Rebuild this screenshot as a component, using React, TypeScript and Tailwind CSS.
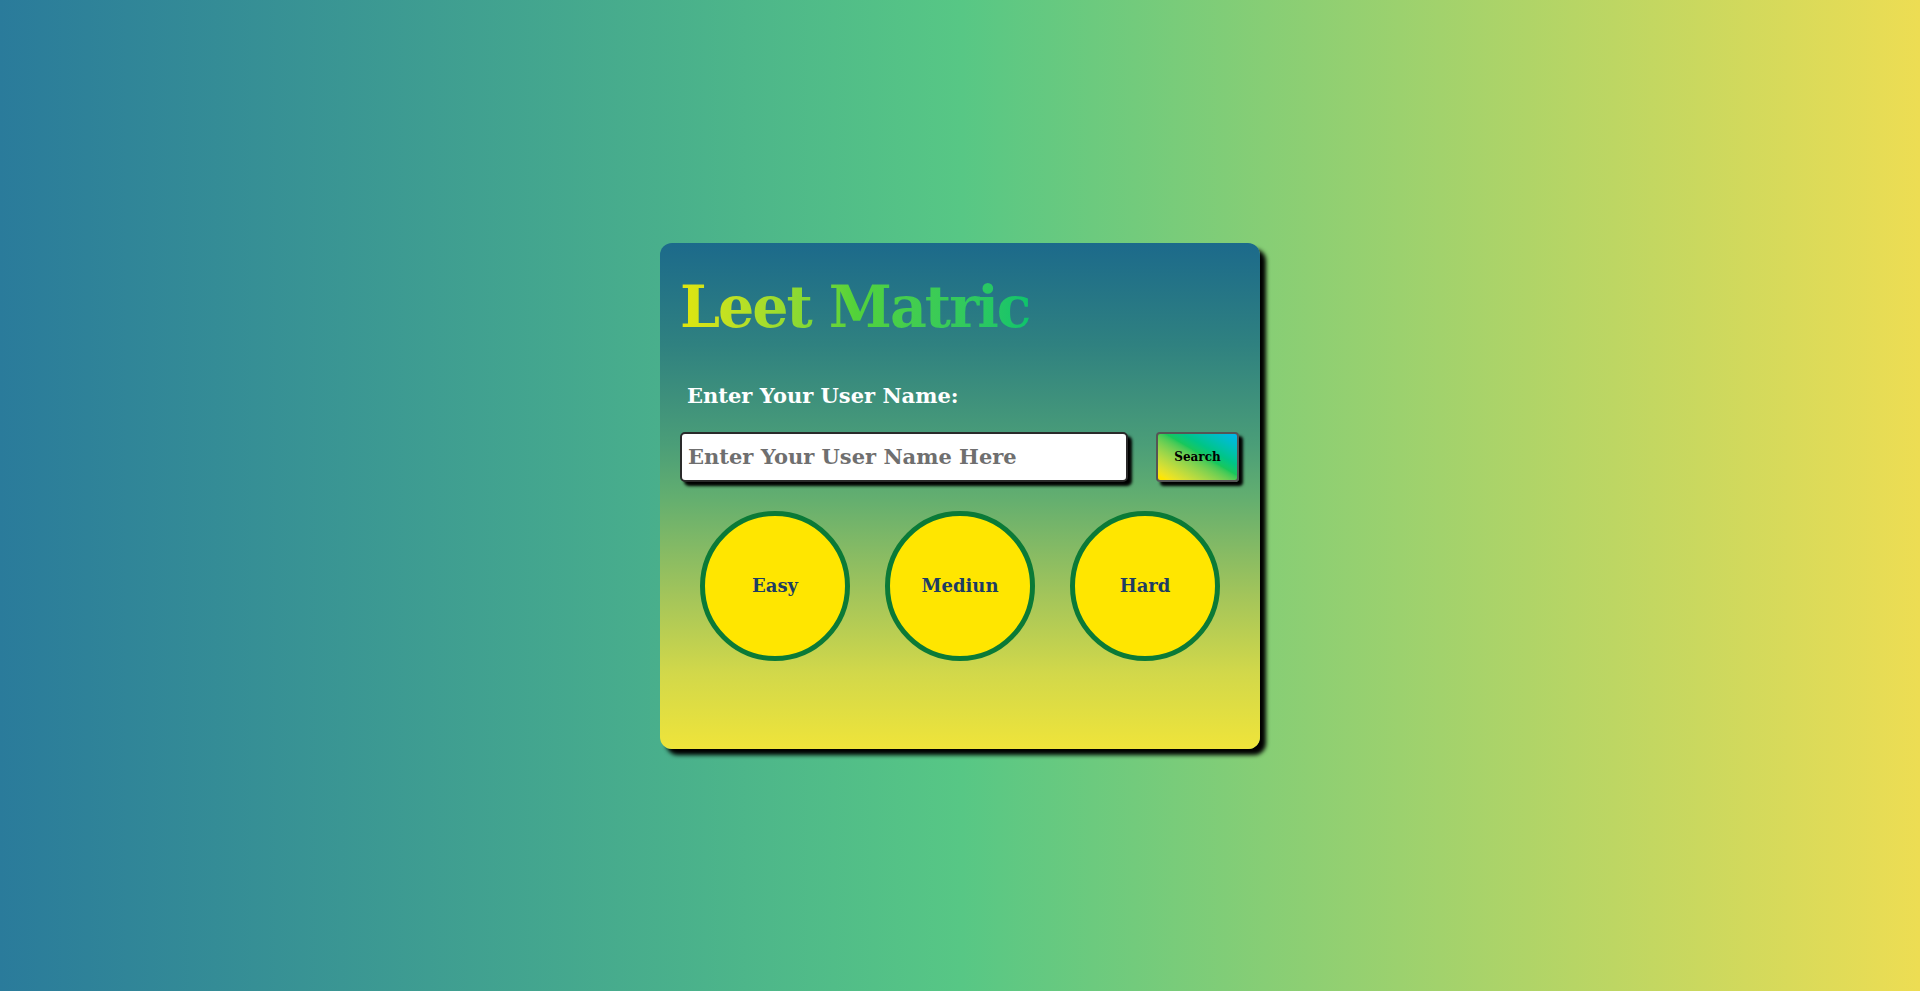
import React from "react";

const font = { fontFamily: '"Roboto Slab", "DejaVu Serif", serif' };

export default function App() {
  return (
    <div
      className="min-h-screen w-full flex items-center justify-center bg-[linear-gradient(90deg,#2a7b9b_0%,#57c785_50%,#eddd53_100%)]"
      style={font}
    >
      <div className="w-[600px] h-[506px] rounded-[12px] px-5 shadow-[6px_6px_4px_#000] bg-[linear-gradient(180deg,#1c6a8b_0%,#2f8180_20%,#4b9e78_40%,#62ae70_50%,#a4c55a_70%,#d2d84a_85%,#efe43a_100%)] flex flex-col">
        <h1 className="mt-[26px] text-[57px] leading-[76px] font-bold tracking-[-2px] bg-gradient-to-r from-[#e2e60a] via-[#52d23a] to-[#0cc46c] bg-clip-text text-transparent w-fit">
          Leet Matric
        </h1>
        <label className="mt-[36px] ml-[7px] text-[21px] leading-[30px] font-bold text-white">
          Enter Your User Name:
        </label>
        <div className="mt-[21px] flex items-center justify-between">
          <input
            type="text"
            placeholder="Enter Your User Name Here"
            className="w-[448px] h-[50px] rounded-[5px] border-2 border-[#2a2a2a] bg-white px-[6px] text-[21px] font-bold text-[#333] placeholder:text-[#6f6f6f] shadow-[4px_4px_3px_#000] outline-none"
            style={font}
          />
          <button
            className="w-[83px] h-[50px] mr-[1px] rounded-[4px] border-2 border-[#555] bg-gradient-to-tr from-[#ffe600] from-[5%] via-[#18c75a] via-[55%] to-[#00b6ee] text-[12px] font-bold text-black shadow-[4px_4px_3px_#000]"
            style={font}
          >
            Search
          </button>
        </div>
        <div className="mt-[29px] flex justify-center gap-[35px]">
          {["Easy", "Mediun", "Hard"].map((t) => (
            <div
              key={t}
              className="w-[150px] h-[150px] rounded-full border-[5px] border-[#0b7a37] bg-[#ffe600] flex items-center justify-center"
            >
              <span className="text-[18px] font-bold text-[#1d3d63]">{t}</span>
            </div>
          ))}
        </div>
      </div>
    </div>
  );
}
